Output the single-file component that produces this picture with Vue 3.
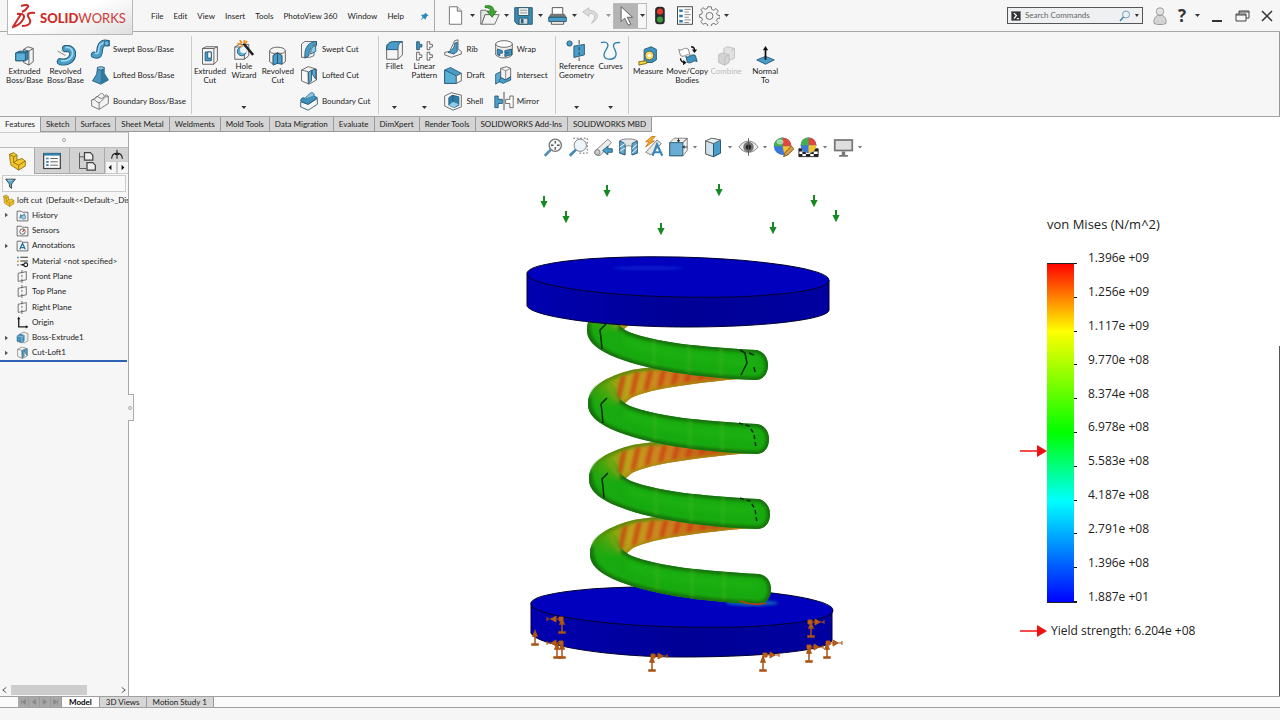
<script setup>
const D = '#1f5673'

const icons = {
  extrude: `<path d="M11 5l5-3 6 2v15l-5 4-6-3z" fill="#f4f4f4" stroke="#555"/><path d="M17 7l5-3M17 7v16M11 5l6 2" stroke="#555" fill="none"/><path d="M2 9l4-2h10v9l-3 2H2z" fill="#3d8ab5" stroke="${D}"/><path d="M2 9h11v9H2z" fill="#5fb0d8" stroke="${D}"/><path d="M13 9l3-2" stroke="${D}"/>`,
  revolve: `<path d="M7 6c6 6 13-3 12 7-1 7-8 8-14 6" fill="none" stroke="#999" stroke-dasharray="2 1"/><path d="M12 4c6-1 9 3 8 8s-7 9-14 7" stroke="${D}" stroke-width="8" fill="none" stroke-linecap="round"/><path d="M12 4c6-1 9 3 8 8s-7 9-14 7" stroke="#4a9dc9" stroke-width="6" fill="none" stroke-linecap="round"/><path d="M12 3c6-1 9 3 8 8s-7 8-13 7" stroke="#a5d6ee" stroke-width="2" fill="none"/><path d="M3 7l9 5" stroke="#777"/>`,
  sweep: `<path d="M5 19c9 3 5-6 8-11 2-3 5-4 8-3" stroke="${D}" stroke-width="8" fill="none" stroke-linecap="round"/><path d="M5 19c9 3 5-6 8-11 2-3 5-4 8-3" stroke="#4a9dc9" stroke-width="6" fill="none" stroke-linecap="round"/><path d="M6 17c7 2 3-6 6-10 2-2 4-3 7-3" stroke="#9fd2ec" stroke-width="2" fill="none"/><circle cx="20" cy="5" r="3" fill="#6fb6d8" stroke="${D}"/>`,
  loft: `<path d="M9 3h8v7l5 8-9 5-10-4 5-8z" fill="#4a95bd" stroke="${D}"/><path d="M13 5v18l9-5-5-8V3z" fill="#2f789f"/><ellipse cx="13" cy="4" rx="4" ry="2" fill="#8cc8e4" stroke="${D}"/>`,
  boundary: `<path d="M2 11l4-2c1-3 3-3 5-1l3 1 3-2c1-3 4-3 5 0v8L11 22l-9-4z" fill="#f3f3f3" stroke="#666"/><path d="M2 11c4-3 5 3 9 3 4-1 6-9 11-7M11 14v8M6 9l6-5c2-2 4-1 5 2" stroke="#666" fill="none"/>`,
  boundarycut: `<path d="M2 13l9 3 11-7v7l-11 7-9-4z" fill="#f6f6f6" stroke="${D}"/><path d="M2 12c1-5 4-5 6-2l5-5c2-3 5-2 5 1l4 2-11 8z" fill="#3f93bd" stroke="${D}"/><path d="M6 10l7-7c3-2 5-1 5 2" fill="#8ecbe7" stroke="${D}"/>`,
  excut: `<path d="M4 4l4-2h13v16l-4 4H4z" fill="#f5f5f5" stroke="#555"/><path d="M4 4h13v18M17 4l4-2" fill="none" stroke="#555"/><path d="M7 8h7v10H7z" fill="#4a9dc9" stroke="${D}"/><path d="M10 8h4v7h-4z" fill="#fff" stroke="${D}"/>`,
  hole: `<path d="M2 8l5-3h11v13l-5 4H2z" fill="#f2f2f2" stroke="#555"/><path d="M2 8h11v14" fill="none" stroke="#555"/><circle cx="10" cy="13" r="5" fill="#5bacd5" stroke="${D}"/><circle cx="12" cy="11" r="4" fill="#eef6fb"/><path d="M12 4l11 13" stroke="#222" stroke-width="3"/><path d="M8 0l2 4M13 0v4M5 4l4 1M16 1l-2 3M9 8l2-2" stroke="#f08a1a" stroke-width="2"/>`,
  revcut: `<path d="M3 7c0-6 18-6 18 0v12l-4 3V12l-5-3-5 3v10l-4-3z" fill="#f4f4f4" stroke="#555"/><path d="M7 12l5-3v12l-5 2zM12 9l5 3v10l-5-1z" fill="#4a9dc9" stroke="${D}"/><path d="M3 7c2 3 5 3 9 2 4 1 7 1 9-2" fill="none" stroke="#555"/>`,
  sweepcut: `<path d="M3 6l4-3h14v5l-3 3v9l-5 2H3z" fill="#f4f4f4" stroke="#555"/><path d="M21 3v4c-6 0-9 5-9 13l-5 3V19C7 10 12 3 21 3z" fill="#4a9dc9" stroke="${D}"/><path d="M20 8c-5 1-6 5-6 10l6-3z" fill="#8ecbe7" stroke="${D}"/>`,
  loftcut: `<path d="M3 6l8-4 10 3v13l-9 5-9-4z" fill="#f7f7f7" stroke="#555"/><path d="M11 9l4-3v13l-3 3zM16 6l4-1v12l-4-6z" fill="#5bacd5" stroke="${D}"/><path d="M3 6l8 2v15" fill="none" stroke="#555"/>`,
  fillet: `<path d="M3 6c3-4 5-4 8-4h10v15l-5 5H3z" fill="#f5f5f5" stroke="#555"/><path d="M3 11c0-6 3-8 7-9h11c-4 1-5 4-5 9z" fill="#4a9dc9" stroke="${D}"/><path d="M16 11v11" stroke="#555"/>`,
  linear: `<path d="M3 2h3v3h3v3H6v3H3z" fill="#3f93bd" stroke="${D}"/><path d="M15 2h3v3h3v3h-3v3h-3zM3 14h3v3h3v3H6v3H3zM15 14h3v3h3v3h-3v3h-3z" fill="#fff" stroke="#555"/>`,
  rib: `<path d="M14 2l4-1v11l4 3v3l-12 4-8-3v-3l6-1z" fill="#f5f5f5" stroke="#555"/><path d="M14 5c0 6-4 9-8 11l7 2 4-3V4z" fill="#4a9dc9" stroke="${D}"/>`,
  draft: `<path d="M2 6l7-3 13 7-6 3v9H2z" fill="#4a9dc9" stroke="${D}"/><path d="M2 6l14 7v9H2z" fill="#5bb0d8" stroke="${D}"/><path d="M16 13l6-3v9l-6 3z" fill="#f4f4f4" stroke="#555"/>`,
  shell: `<path d="M2 6l8-4 12 3v14l-10 4-10-5z" fill="#f6f6f6" stroke="#555"/><path d="M7 8l4-3 8 2v10l-6 3-6-3z" fill="#2e7da8" stroke="${D}"/><path d="M7 17l5-4 7 3-6 4z" fill="#8ecbe7"/><path d="M12 5v8" stroke="${D}"/>`,
  wrap: `<path d="M2 6v13c4 5 16 5 20 0V6z" fill="#eee" stroke="#555"/><ellipse cx="12" cy="6" rx="10" ry="4" fill="#fafafa" stroke="#555"/><path d="M4 12l6 2v3H7v3l-3-1zM13 14l8-2v7l-8 2v-3l4-1v-1l-4 1z" fill="#3f93bd" stroke="${D}"/>`,
  intersect: `<path d="M2 11l6-3v11l-6 4z" fill="#5bacd5" stroke="${D}"/><path d="M8 4l7-2 5 2v10l-6 4-6-3z" fill="#f1f1f1" stroke="#555"/><path d="M8 4l6 3v11M14 7l6-3" fill="none" stroke="#777"/><path d="M8 15l6 3 6-4v4l-9 4-5-2z" fill="#4a9dc9" stroke="${D}"/>`,
  mirror: `<path d="M1 6h4v4h5v5H5v5H1z" fill="#4a9dc9" stroke="${D}"/><path d="M23 6h-4v4h-5v5h5v5h4z" fill="#fff" stroke="#555"/><path d="M12 1v22" stroke="#333"/>`,
  refgeom: `<circle cx="4" cy="4" r="3" fill="#4a9dc9" stroke="${D}"/><path d="M9 7l12-2v12L9 20z" fill="#4a9dc9" stroke="${D}"/><path d="M15 0v5M15 8v4M15 14v3M15 20v4" stroke="#333"/>`,
  curves: `<path d="M1 3c8-2 10 2 6 8s-3 11 4 11 9-5 6-11c-3-5-2-9 6-8" fill="none" stroke="#2f7fa9" stroke-width="1.500"/>`,
  measure: `<path d="M7 5l8-3 6 3v12l-5 3H7z" fill="#3b93c1" stroke="${D}"/><circle cx="13" cy="12" r="5" fill="#f6d95c" stroke="#555"/><circle cx="13" cy="12" r="2" fill="#fff"/><path d="M1 19l9-1v3l-9 2z" fill="#f4d33c" stroke="#7a6510"/>`,
  move: `<path d="M2 5c4 3 6-4 11 0l2 7c-5-3-6 3-11 0z" fill="#fff" stroke="#777"/><path d="M10 13c4 3 6-4 11-1l2 7c-4-3-6 3-11 1z" fill="#3f93bd" stroke="${D}"/><path d="M16 2c3 0 4 1 4 4M4 15c0 3 1 4 4 5" fill="none" stroke="#111" stroke-width="1.500"/><path d="M17 5h6l-3 4zM7 17v6l4-3z" fill="#111"/>`,
  combine: `<path d="M9 4l4-2 8 2v11l-4 2-8-2z" fill="#e2e2e2" stroke="#bbb"/><path d="M3 11l4-2 8 2v9l-5 3-7-3z" fill="#d4d4d4" stroke="#bbb"/><path d="M10 14l5-3M10 14v9M17 7l4-3" stroke="#bbb"/>`,
  normal: `<path d="M2 17l10-4 10 4-10 5z" fill="#4a9dc9" stroke="${D}"/><path d="M12 17V5" stroke="#111" stroke-width="2"/><path d="M9 6l3-5 3 5z" fill="#111"/>`,
  newdoc: `<path d="M5 2h9l5 5v15H5z" fill="#fff" stroke="#666"/><path d="M14 2v5h5" fill="#ddd" stroke="#666"/>`,
  open: `<path d="M2 6h6l2 2h7v3H7l-4 11H2z" fill="#e5e5e5" stroke="#666"/><path d="M7 11h16l-5 11H3z" fill="#f3f3f3" stroke="#666"/><path d="M7 1c7-1 10 1 10 6h3l-5 7-6-7h4c0-3-2-4-6-4z" fill="#3fa535" stroke="#257a1d"/>`,
  save: `<path d="M2 3h20v19H5l-3-3z" fill="#3a8bb3" stroke="#234f66"/><path d="M6 3h12v9H6z" fill="#eef2f4" stroke="#234f66"/><path d="M8 6h8M8 9h8" stroke="#888"/><path d="M7 15h10v7H7z" fill="#d9d9d9" stroke="#234f66"/><path d="M9 16h3v5H9z" fill="#27627f"/>`,
  print: `<path d="M6 3h12v8H6z" fill="#fff" stroke="#444"/><path d="M4 10h16l3 5H1z" fill="#777"/><path d="M2 14h20v5H2z" fill="#4a9dc9" stroke="${D}"/><path d="M5 19h14v3H5z" fill="#fff" stroke="#444"/>`,
  undo: `<path d="M9 3L2 8l7 5v-3c7-1 9 3 3 11 9-5 10-14-3-15z" fill="#dcdcdc" stroke="#bcbcbc"/>`,
  select: `<path d="M7 2v17l4-4 4 8 3-1-4-8h6z" fill="#fff" stroke="#555"/>`,
  traffic: `<rect x="7" y="2" width="11" height="20" rx="4" fill="#2a2a2a"/><circle cx="12.500" cy="7.500" r="3.500" fill="#e03a2e"/><circle cx="12.500" cy="16.500" r="3.500" fill="#3a9c3c"/>`,
  options: `<rect x="4" y="2" width="17" height="20" fill="#fff" stroke="#333"/><path d="M6 5h4v3H6zM6 11h4v3H6zM6 17h4v3H6z" fill="#2d7fa9"/><path d="M12 5h7M12 8h5M12 11h7M12 14h5M12 17h7M12 20h5" stroke="#777"/>`,
  gear: `<path d="M10 2h4l.5 3 2.500 1 2.500-2 2.500 3-2 2.500 1 2 3 .5v3l-3 .5-1 2.500 2 2-2.500 2.500-2.500-1.500-2.500 1-.5 2.500h-4l-.5-2.500-2.500-1L4.500 22 2 19l2-2-1-2.500L.5 14v-3l2.500-.5 1-2.500-2-2.500L4.500 3 7 5l2.500-1z" fill="#f5f5f5" stroke="#666"/><circle cx="12" cy="12.500" r="4" fill="#f6f6f6" stroke="#666"/>`,
  pin: `<path d="M13 3l8 7-3 1-3 4v4L10 15 3 21l5-8-4-5h5l4-2z" fill="#2f87bd"/>`,
  user: `<path d="M4 22c-1-8 3-11 8-11s9 3 8 11c-4 2-12 2-16 0z" fill="#d4d4d4" stroke="#888"/><circle cx="12" cy="6" r="5" fill="#e2e2e2" stroke="#888"/>`,
  part: `<path d="M3 4l5-2 4 3v6l6-2 4 3v6l-8 5-9-6-1-4z" fill="#f2c62c" stroke="#8a6a08"/><path d="M3 4l5 3v7l6 3v6M8 7l4-2M14 17l8-5M8 14l4-3" stroke="#8a6a08" fill="none"/>`,
  props: `<rect x="2" y="3" width="20" height="18" fill="#fff" stroke="#444" stroke-width="1.500"/><path d="M2 4h20" stroke="#2d7fa9" stroke-width="3"/><path d="M5 8h3v2H5zM5 12h3v2H5zM5 16h3v2H5z" fill="#2d7fa9"/><path d="M10 9h9M10 13h9M10 17h9" stroke="#444"/>`,
  config: `<path d="M3 2v19h8M3 7h6" stroke="#444" fill="none"/><path d="M9 2h7l3 3v6H9zM12 14h7l3 3v6H12z" fill="#eee" stroke="#444" stroke-width="1.500"/>`,
  dim: `<path d="M2 20c1-14 19-14 20 0M12 3v17M8 12h8" fill="none" stroke="#222" stroke-width="2"/>`,
  funnel: `<path d="M3 4h18l-7 9v8l-4-3v-5z" fill="#5aa9cf" stroke="#333" stroke-width="1.500"/><path d="M7 6h8" stroke="#dff1fa"/>`,
  history: `<path d="M2 4h8l2 2h10v16H2z" fill="#f4f4f4" stroke="#555" stroke-width="1.500"/><path d="M7 18l2-7 3 3 4-5" stroke="#2d7fa9" stroke-width="2" fill="none"/><circle cx="14" cy="15" r="4" fill="#9ccbe3" stroke="#2d5f7a"/>`,
  sensors: `<path d="M2 4h8l2 2h10v16H2z" fill="#f4f4f4" stroke="#555" stroke-width="1.500"/><circle cx="12" cy="14" r="5" fill="#fff" stroke="#444" stroke-width="1.500"/><path d="M12 15l3-5" stroke="#d33" stroke-width="2"/>`,
  annot: `<path d="M2 4h8l2 2h10v16H2z" fill="#f4f4f4" stroke="#555" stroke-width="1.500"/><path d="M7 19l5-11 5 11M9 16h6" stroke="#2474a3" stroke-width="2.500" fill="none"/>`,
  material: `<path d="M8 4h14M8 11h14M8 18h6" stroke="#333" stroke-width="2"/><path d="M2 3h3v3H2z" fill="#2d7fa9"/><path d="M2 10h3v3H2z" fill="#d58512"/><path d="M2 17h3v3H2z" fill="#777"/><path d="M11 18h6" stroke="#111" stroke-width="3"/><circle cx="18" cy="18" r="3.500" fill="#fff" stroke="#111" stroke-width="2"/>`,
  plane: `<path d="M4 6l15-3v15L4 21z" fill="#f7f7f7" stroke="#555" stroke-width="1.500"/><path d="M11 0v6M11 9v4M11 16v8" stroke="#555" stroke-width="1.500"/>`,
  origin: `<path d="M5 4v16h16" fill="none" stroke="#222" stroke-width="2.500"/><path d="M2 6l3-5 3 5zM18 17l5 3-5 3z" fill="#222"/>`,
  bossx: `<path d="M8 5l7-3 7 3v13l-7 4-7-3z" fill="#eee" stroke="#555"/><path d="M2 9l5-3 8 2v10l-4 4-9-3z" fill="#3f93bd" stroke="${D}"/><path d="M2 9l9 2v11M11 11l4-3" fill="none" stroke="#bfe0f0"/>`,
  cmd: `<rect x="1" y="1" width="22" height="22" fill="#333" stroke="#777"/><path d="M7 5l6 6-6 7M14 18h5" stroke="#fff" stroke-width="3" fill="none"/>`,
  mag: `<circle cx="14" cy="9" r="7" fill="#e6f1f8" stroke="#5d87a5" stroke-width="1.500"/><path d="M9 14l-7 8" stroke="#4a80a6" stroke-width="3"/>`,
  zoomfit: `<circle cx="14" cy="10" r="7" fill="#f3f8fa" stroke="#777" stroke-width="1.500"/><path d="M14 5v3M14 12v3M9 10h3M16 10h3" stroke="#555" stroke-width="1.500"/><path d="M9 15l-7 7" stroke="#4f8fb3" stroke-width="3"/>`,
  zoomarea: `<path d="M6 2h16v17H12" fill="none" stroke="#555" stroke-dasharray="2 2"/><circle cx="14" cy="10" r="7" fill="#edf5f8" stroke="#777"/><path d="M9 15l-7 7" stroke="#3f87b4" stroke-width="3"/>`,
  prev: `<path d="M2 17L17 3l4 4L9 21c-3 2-8 0-7-4z" fill="#ececec" stroke="#777"/><ellipse cx="5" cy="18" rx="3" ry="3" fill="#ccc" stroke="#777"/><path d="M22 14h-5v-3l-6 5 6 5v-3h5z" fill="#4a9dc9" stroke="${D}"/>`,
  section: `<path d="M2 5c3-3 17-3 20 0v14l-6 2v-9c-2-2-6-2-8 0v9l-6-2z" fill="#e6e6e6" stroke="#777"/><path d="M2 5l6 3v13l-6-2zM16 8l6-3v14l-6 2z" fill="#62a9cf" stroke="${D}"/><path d="M2 12l6-4M2 17l6-4M16 14l6-5M16 19l6-5" stroke="#fff"/>`,
  dynann: `<path d="M3 18L16 4l5 4L9 21z" fill="#e7e7e7" stroke="#777"/><path d="M10 0L3 6h4l-4 6 10-7H9l5-5z" fill="#f6a93a" stroke="#c97816"/><path d="M11 22l5-13 6 13M13 18h7" fill="none" stroke="#3a88b8" stroke-width="2.500"/>`,
  orient: `<path d="M2 7l5-5h15v14l-5 6H2z" fill="#eee" stroke="#777"/><path d="M2 7h15v15H2z" fill="#69aed2" stroke="${D}"/><path d="M17 7l5-5M12 2v4M22 12h-4" stroke="#333"/><path d="M10 4h4l-2 3zM19 10v4l-3-2z" fill="#333"/>`,
  display: `<path d="M3 5l7-3 10 2v15l-8 4-9-3z" fill="#ddd" stroke="#666"/><path d="M3 5l9 3v15l-9-3z" fill="#cfe2ec" stroke="#555"/><path d="M12 8l8-4v15l-8 4z" fill="#4a9dc9" stroke="${D}"/><path d="M3 5l7-3 10 2-8 4z" fill="#e7f1f6" stroke="#666"/>`,
  eye: `<path d="M1 12c6-9 16-9 22 0-6 8-16 8-22 0z" fill="#eee" stroke="#777"/><circle cx="12" cy="12" r="6" fill="#777"/><circle cx="12" cy="12" r="3" fill="#222"/><path d="M12 2v20" stroke="#555"/>`,
  ball: `<circle cx="11" cy="11" r="10" fill="#3b78d8"/><path d="M11 1a10 10 0 0 1 10 10H11z" fill="#e0483c"/><path d="M11 1a10 10 0 0 0-10 10h10z" fill="#45b04a"/><path d="M11 11h10a10 10 0 0 1-8 10z" fill="#f0c530"/><ellipse cx="8" cy="6" rx="4" ry="3" fill="#fff" opacity=".5"/><path d="M12 23l2-5 7-7 3 3-7 7z" fill="#d99a4a" stroke="#704d1c"/>`,
  scene: `<path d="M1 14h22v9H1z" fill="#fff" stroke="#222"/><path d="M1 14h4v3H1zM18 14h5v3h-5zM5 17h4v3H5zM14 17h4v3h-4zM1 20h4v3H1zM9 20h5v3H9zM18 20h5v3h-5z" fill="#222"/><circle cx="12" cy="10" r="9" fill="#3b78d8"/><path d="M12 1a9 9 0 0 1 9 9h-9z" fill="#e0483c"/><path d="M12 1a9 9 0 0 0-9 9h9z" fill="#45b04a"/><path d="M12 10h9a9 9 0 0 1-9 9z" fill="#f0c530"/>`,
  monitor: `<path d="M1 3h22v14H1z" fill="#777"/><path d="M3 5h18v10H3z" fill="#dedede"/><path d="M10 17h4v4h-4zM7 21h10v2H7z" fill="#777"/>`,
}

const menus = ['File', 'Edit', 'View', 'Insert', 'Tools', 'PhotoView 360', 'Window', 'Help']
const quick = [
  { icon: 'newdoc', label: 'New', more: true },
  { icon: 'open', label: 'Open', more: true },
  { icon: 'save', label: 'Save', more: true },
  { icon: 'print', label: 'Print', more: true },
  { icon: 'undo', label: 'Undo', more: true, off: true },
  { icon: 'select', label: 'Select', more: true, on: true },
  { icon: 'traffic', label: 'Rebuild' },
  { icon: 'options', label: 'File Properties' },
  { icon: 'gear', label: 'Options', more: true },
]
const groups = [
  {
    size: 'wide',
    big: [['extrude', 'Extruded', 'Boss/Base'], ['revolve', 'Revolved', 'Boss/Base']],
    cols: [[['sweep', 'Swept Boss/Base'], ['loft', 'Lofted Boss/Base'], ['boundary', 'Boundary Boss/Base']]],
  },
  {
    size: 'mid',
    big: [['excut', 'Extruded', 'Cut'], ['hole', 'Hole', 'Wizard', 1], ['revcut', 'Revolved', 'Cut']],
    cols: [[['sweepcut', 'Swept Cut'], ['loftcut', 'Lofted Cut'], ['boundarycut', 'Boundary Cut']]],
  },
  {
    size: 'slim',
    big: [['fillet', 'Fillet', '', 1], ['linear', 'Linear', 'Pattern', 1]],
    cols: [
      [['rib', 'Rib'], ['draft', 'Draft'], ['shell', 'Shell']],
      [['wrap', 'Wrap'], ['intersect', 'Intersect'], ['mirror', 'Mirror']],
    ],
  },
  { size: 'pair', big: [['refgeom', 'Reference', 'Geometry', 1], ['curves', 'Curves', '', 1]], cols: [] },
  {
    size: 'tools',
    big: [['measure', 'Measure', ''], ['move', 'Move/Copy', 'Bodies'], ['combine', 'Combine', '', 0, 1], ['normal', 'Normal', 'To']],
    cols: [],
  },
]
const tabs = ['Features', 'Sketch', 'Surfaces', 'Sheet Metal', 'Weldments', 'Mold Tools', 'Data Migration', 'Evaluate', 'DimXpert', 'Render Tools', 'SOLIDWORKS Add-Ins', 'SOLIDWORKS MBD']
const tree = [
  ['history', 'History', 1],
  ['sensors', 'Sensors'],
  ['annot', 'Annotations', 1],
  ['material', 'Material <not specified>'],
  ['plane', 'Front Plane'],
  ['plane', 'Top Plane'],
  ['plane', 'Right Plane'],
  ['origin', 'Origin'],
  ['bossx', 'Boss-Extrude1', 1],
  ['loftcut', 'Cut-Loft1', 1],
]
const hud = [
  ['zoomfit', 'Zoom to Fit'], ['zoomarea', 'Zoom to Area'], ['prev', 'Previous View'], ['section', 'Section View'],
  ['dynann', 'Dynamic Annotation Views'], ['orient', 'View Orientation', 1], ['display', 'Display Style', 1],
  ['eye', 'Hide/Show Items', 1], ['ball', 'Edit Appearance'], ['scene', 'Apply Scene', 1], ['monitor', 'View Settings', 1],
]
const loads = [[544, 202], [566, 217], [607, 191], [661, 229], [719, 190], [773, 228], [814, 201], [836, 216]]
const coils = [
  { x: 2, y: 150, last: true },
  { x: 1, y: 75 },
  { x: 0, y: 0 },
  { x: -1, y: -74, first: true },
]
const stripes = Array.from({ length: 9 }, (_, i) => 618 + i * 13)
const upFix = [[562, 618], [557, 643], [562, 643], [535, 630], [652, 656], [763, 656], [811, 622], [809, 647], [827, 643]]
const sideFix = [[561, 619, 1], [561, 643, 1], [653, 656, -1], [765, 655, -1], [810, 622, -1], [809, 647, -1], [828, 643, -1]]
const scale = ['1.396e +09', '1.256e +09', '1.117e +09', '9.770e +08', '8.374e +08', '6.978e +08', '5.583e +08', '4.187e +08', '2.791e +08', '1.396e +08', '1.887e +01']
const ticks = scale.map((_, i) => Math.round(i * 33.8) + 1)
</script>

<template>
  <div class="window">
    <header class="titlebar">
      <div class="brand">
        <svg class="ds" viewBox="0 0 24 26" aria-hidden="true">
          <path d="M9 3c6-2 9-1 6 2-1 2-3 3-5 4M5 11c7-1 9 2 5 7-2 3-6 5-9 6l8-13M23 10c-6-1-9 1-6 5 3 5 0 8-7 8" fill="none" stroke="#cf2a27" stroke-width="2" />
        </svg>
        <span class="name"><b>SOLID</b>WORKS</span>
      </div>
      <nav class="menus">
        <button v-for="m in menus" :key="m">{{ m }}</button>
        <button class="pin" aria-label="Pin menu"><svg viewBox="0 0 24 24" v-html="icons.pin"></svg></button>
      </nav>
      <div class="quick">
        <button v-for="q in quick" :key="q.icon" :class="{ on: q.on, off: q.off }" :aria-label="q.label">
          <span class="face"><svg viewBox="0 0 24 24" v-html="icons[q.icon]"></svg></span>
          <i v-if="q.more" class="caret"></i>
        </button>
      </div>
      <label class="search">
        <svg viewBox="0 0 24 24" v-html="icons.cmd"></svg>
        <input type="text" placeholder="Search Commands" aria-label="Search Commands" />
        <svg class="lens" viewBox="0 0 24 24" v-html="icons.mag"></svg>
        <i class="caret"></i>
      </label>
      <div class="controls">
        <button aria-label="Account"><svg class="person" viewBox="0 0 24 24" v-html="icons.user"></svg></button>
        <button class="help" aria-label="Help">?</button>
        <i class="caret"></i>
        <button aria-label="Minimize"><svg viewBox="0 0 16 16"><path d="M3 13h10" stroke="#333" stroke-width="2" /></svg></button>
        <button aria-label="Restore"><svg viewBox="0 0 16 16"><path d="M5 6V3h10v7h-3M2 6h10v7H2zM5 4h10M2 7h10" fill="none" stroke="#444" /></svg></button>
        <button aria-label="Close"><svg viewBox="0 0 16 16"><path d="M3 3l10 10M13 3L3 13" stroke="#333" stroke-width="1.5" /></svg></button>
      </div>
    </header>

    <section class="ribbon">
      <div v-for="(g, gi) in groups" :key="gi" class="group" :class="g.size">
        <button v-for="b in g.big" :key="b[1] + b[2]" class="big" :class="{ drop: b[3] }" :disabled="!!b[4]">
          <svg viewBox="0 0 24 24" v-html="icons[b[0]]"></svg>
          <span>{{ b[1] }}</span>
          <span>{{ b[2] }}</span>
          <i v-if="b[3]" class="caret"></i>
        </button>
        <div v-for="(c, ci) in g.cols" :key="ci" class="col">
          <button v-for="s in c" :key="s[1]"><svg viewBox="0 0 24 24" v-html="icons[s[0]]"></svg>{{ s[1] }}</button>
        </div>
      </div>
    </section>

    <nav class="tabs">
      <button v-for="(t, i) in tabs" :key="t" :class="{ active: i === 0 }">{{ t }}</button>
    </nav>

    <main class="work">
      <aside class="panel">
        <div class="grip"><i></i></div>
        <div class="ptabs">
          <button class="active" aria-label="Feature tree"><svg viewBox="0 0 24 24" v-html="icons.part"></svg></button>
          <button aria-label="Properties"><svg viewBox="0 0 24 24" v-html="icons.props"></svg></button>
          <button aria-label="Configurations"><svg viewBox="0 0 24 24" v-html="icons.config"></svg></button>
          <div class="rest">
            <svg viewBox="0 0 24 24" v-html="icons.dim"></svg>
            <div class="steps">
              <button aria-label="Previous tab"><svg viewBox="0 0 10 10"><path d="M6 2v6L3 5z" /></svg></button>
              <button aria-label="Next tab"><svg viewBox="0 0 10 10"><path d="M4 2v6l3-3z" /></svg></button>
            </div>
          </div>
        </div>
        <label class="filter"><svg viewBox="0 0 24 24" v-html="icons.funnel"></svg><input type="text" aria-label="Filter" /></label>
        <ul class="tree">
          <li class="root"><svg viewBox="0 0 24 24" v-html="icons.part"></svg>loft cut&nbsp; (Default&lt;&lt;Default&gt;_Dis</li>
          <li v-for="t in tree" :key="t[1]">
            <span class="fold"><svg v-if="t[2]" viewBox="0 0 6 8"><path d="M1 1l4 3-4 3z" fill="#555" /></svg></span>
            <svg viewBox="0 0 24 24" v-html="icons[t[0]]"></svg>{{ t[1] }}
          </li>
        </ul>
        <div class="rollback"></div>
        <div class="hscroll">
          <svg viewBox="0 0 8 8"><path d="M6 1L2 4l4 3" /></svg>
          <div class="track"><div class="thumb"></div></div>
          <svg viewBox="0 0 8 8"><path d="M2 1l4 3-4 3" /></svg>
        </div>
        <div class="handle"><i></i></div>
      </aside>

      <section class="viewport">
        <div class="hud">
          <button v-for="h in hud" :key="h[0]" :aria-label="h[1]">
            <svg viewBox="0 0 24 24" v-html="icons[h[0]]"></svg><i v-if="h[2]" class="caret"></i>
          </button>
        </div>

        <svg class="model" viewBox="520 170 369 520">
          <defs>
            <linearGradient id="bk" gradientUnits="userSpaceOnUse" x1="588" x2="755" y1="0" y2="0">
              <stop offset="0" stop-color="#279a0c" />
              <stop offset=".12" stop-color="#76a80c" />
              <stop offset=".24" stop-color="#c0a01a" />
              <stop offset=".45" stop-color="#cc8420" />
              <stop offset=".75" stop-color="#c05a14" />
              <stop offset="1" stop-color="#98870e" />
            </linearGradient>
            <linearGradient id="fr" gradientUnits="userSpaceOnUse" x1="0" x2="0" y1="380" y2="408">
              <stop offset="0" stop-color="#18aa10" stop-opacity="0" />
              <stop offset="1" stop-color="#18aa10" />
            </linearGradient>
            <linearGradient id="side" x1="0" x2="1">
              <stop offset="0" stop-color="#0000b0" />
              <stop offset=".5" stop-color="#000096" />
              <stop offset="1" stop-color="#0000a0" />
            </linearGradient>
            <filter id="b1"><feGaussianBlur stdDeviation="1.500" /></filter>
            <filter id="b2" x="-20%" y="-50%" width="140%" height="200%"><feGaussianBlur stdDeviation="3" /></filter>
            <clipPath id="cb"><path d="M588 405C588 388 603 378 628 371C655 364 710 366 750 372L752 378C710 381 650 388 631 398L624 404L612 420Z" /></clipPath>
            <clipPath id="cf"><path d="M588 405C588 390 594 384 606 379L616 388C617 397 620 401 630 406C655 416 700 421 757 424C764 425 769 431 769 439C769 448 764 454 756 454C700 452 645 444 611 429C596 422 588 414 588 405Z" /></clipPath>
          </defs>

          <g>
            <path d="M531 603v30c5 12 75 24 151 24s148-6 150-17v-30z" fill="url(#side)" stroke="#000030" />
            <ellipse cx="682" cy="607" rx="151" ry="20" transform="rotate(1.300 682 607)" fill="#0000be" stroke="#000030" />
            <ellipse cx="752" cy="603" rx="26" ry="3" fill="#0a60b8" filter="url(#b1)" />
          </g>

          <g v-for="c in coils" :key="c.y" :transform="`translate(${c.x} ${c.y})`">
            <g clip-path="url(#cb)">
              <path d="M580 360h180v65H580z" fill="url(#bk)" />
              <g filter="url(#b1)">
                <path v-for="s in stripes" :key="s" :d="`M${s + 9} 362Q${s + 5} 376 ${s} 400`" stroke="#cc3c12" stroke-width="5" fill="none" opacity=".75" />
                <path d="M588 405C588 388 603 378 628 371C640 367 655 367 665 367" stroke="#5c8c08" stroke-width="6" fill="none" />
                <path d="M752 378C710 381 650 388 631 398L622 404" stroke="#a88b0c" stroke-width="4" fill="none" />
              </g>
            </g>
            <g clip-path="url(#cf)">
              <path d="M580 370h200v90H580z" fill="url(#fr)" />
              <path d="M625 414C650 426 700 433 756 436" stroke="#20bb14" stroke-width="8" fill="none" opacity=".5" filter="url(#b2)" />
              <g filter="url(#b1)">
                <path d="M588 396C588 414 596 422 611 429C645 444 700 452 756 454C764 454 769 448 769 439C769 431 764 425 757 424C700 421 655 416 630 406L619 400" stroke="#127009" stroke-width="6" fill="none" />
                <path d="M655 414v26M690 418v30M722 420v30" stroke="#55b822" stroke-width="3" opacity=".3" />
                <path d="M609 385q2 10 10 17" fill="none" stroke="#86a010" stroke-width="4" opacity=".6" />
              </g>
            </g>
            <path v-if="!c.last" d="M607 398l-6 6 1 8 1 11" fill="none" stroke="#042a04" stroke-width="1.500" />
            <path v-if="c.first" d="M741 424l5 3 2 10-6 12M750 427l5 2M755 441l1 5" fill="none" stroke="#042a04" stroke-width="1.500" />
            <path v-else-if="!c.last" d="M739 423l10 3 5 8 2 14" fill="none" stroke="#042a04" stroke-width="1.500" stroke-dasharray="4 3" />
            <path v-else d="M738 451q12 5 26 2" fill="none" stroke="#b5420e" stroke-width="1.500" />
          </g>

          <g>
            <path d="M527 274v32c5 11 80 21 160 21s142-8 142-17v-30z" fill="url(#side)" stroke="#000030" />
            <ellipse cx="678" cy="277" rx="151" ry="20" transform="rotate(1.300 678 277)" fill="#0000be" stroke="#000030" />
            <ellipse cx="648" cy="268" rx="36" ry="2" fill="#0a1ccc" filter="url(#b1)" />
          </g>

          <path v-for="(l, i) in loads" :key="i" :d="`M${l[0]} ${l[1] - 6}v7M${l[0] - 2} ${l[1]}h4l-2 4z`" fill="#168a22" stroke="#168a22" stroke-width="2" />
          <g fill="#c4651c" stroke="#a95212">
            <path v-for="(f, i) in upFix" :key="'u' + i" :d="`M${f[0] - 3} ${f[1] + 15}h6v-1h-6zM${f[0]} ${f[1] + 14}V${f[1] + 5}M${f[0] - 2} ${f[1] + 6}l2-5 2 5z`" stroke-width="1.500" />
            <path v-for="(f, i) in sideFix" :key="'s' + i" :d="`M${f[0]} ${f[1]}h${f[2] * -14}M${f[0] - f[2] * 5} ${f[1] - 3}v6l${f[2] * -5}-3zM${f[0] - f[2] * 14} ${f[1] - 2}v4M${f[0] - 2} ${f[1] - 2}h4v4h-4z`" />
          </g>
        </svg>

        <div class="legend">
          <p class="ltitle">von Mises (N/m^2)</p>
          <div class="lbody">
            <svg class="bar" viewBox="0 0 58 340">
              <defs>
                <linearGradient id="rain" x1="0" x2="0" y1="0" y2="1">
                  <stop offset="0" stop-color="#f00" />
                  <stop offset=".2" stop-color="#ff0" />
                  <stop offset=".5" stop-color="#0f0" />
                  <stop offset=".7" stop-color="#0ff" />
                  <stop offset="1" stop-color="#00f" />
                </linearGradient>
              </defs>
              <path d="M27 0h27v340H27z" fill="url(#rain)" />
              <path d="M27 .5h30M27 339.500h30" stroke="#222" />
              <path v-for="t in ticks" :key="t" :d="`M54 ${t - 0.5}h3`" stroke="#111" />
              <path d="M0 188h17" stroke="#e11" stroke-width="1.500" />
              <path d="M17 182v12l10-6z" fill="#e11" />
            </svg>
            <ol><li v-for="s in scale" :key="s">{{ s }}</li></ol>
          </div>
          <p class="yield">
            <svg viewBox="0 0 28 12"><path d="M0 6h17" stroke="#e11" stroke-width="1.500" /><path d="M17 0v12l10-6z" fill="#e11" /></svg>Yield strength: 6.204e +08
          </p>
        </div>
      </section>
    </main>

    <footer>
      <div class="sheets">
        <div class="steppers">
          <button aria-label="First"><svg viewBox="0 0 10 10"><path d="M3 2v6M8 2v6L4 5z" /></svg></button>
          <button aria-label="Previous"><svg viewBox="0 0 10 10"><path d="M7 2v6L3 5z" /></svg></button>
          <button aria-label="Next"><svg viewBox="0 0 10 10"><path d="M3 2v6l4-3z" /></svg></button>
          <button aria-label="Last"><svg viewBox="0 0 10 10"><path d="M7 2v6M2 2v6l4-3z" /></svg></button>
        </div>
        <button class="sheet active">Model</button>
        <button class="sheet">3D Views</button>
        <button class="sheet">Motion Study 1</button>
      </div>
      <div class="status"></div>
    </footer>
  </div>
</template>

<style>
html, body { background: #fff; }
</style>

<style scoped>
.window { display: flex; flex-direction: column; height: 100vh; overflow: hidden; font: 8px/9px Lato, "Open Sans", sans-serif; color: #222; background: #fff; }
.window * { box-sizing: border-box; }
button { font: inherit; color: inherit; border: 0; padding: 0; background: none; display: flex; align-items: center; white-space: nowrap; }
input { font: inherit; color: inherit; border: 0; padding: 0; background: none; min-width: 0; outline: 0; }
svg { display: block; flex: none; }
p, ul, ol { margin: 0; padding: 0; list-style: none; }
.caret { display: block; flex: none; width: 6px; height: 3px; background: #333; clip-path: polygon(0 0, 100% 0, 50% 100%); }

.titlebar { display: flex; align-items: center; height: 32px; flex: none; background: #f6f6f6; border-bottom: 1px solid #a8a8a8; }
.brand { align-self: flex-start; position: relative; display: flex; align-items: center; gap: 4px; width: 126px; height: 35px; flex: none; margin-left: 7px; padding: 0 0 3px 4px; background: linear-gradient(160deg, #fff 45%, #dedede); border: 1px solid #b8b8b8; border-top: 0; }
.ds { width: 24px; height: 26px; }
.name { font-size: 13px; line-height: 16px; padding-top: 5px; color: #cf3a35; }
.name b { font-weight: 900; color: #cf2a27; }
.menus { display: flex; align-items: center; gap: 10px; width: 302px; height: 31px; padding: 2px 0 0 18px; border-right: 1px solid #aaa; flex: none; }
.pin { margin-left: 5px; }
.pin svg { width: 11px; height: 11px; }
.quick { display: flex; align-items: center; padding-left: 8px; }
.quick button { height: 26px; }
.quick .face { display: flex; width: 25px; height: 26px; align-items: center; justify-content: center; }
.quick svg { width: 21px; height: 21px; }
.quick .caret { width: 5px; margin: 0 2px; }
.quick .on { background: linear-gradient(90deg, #b4b4b4 25px, #f6f6f6 25px); outline: 1px solid #bbb; outline-offset: -1px; }
.quick .off .caret { background: #999; }
.search { display: flex; align-items: center; gap: 4px; width: 136px; height: 17px; margin-left: auto; padding: 0 3px; border: 1px solid #555; background: #eef0f2; flex: none; }
.search svg { width: 10px; height: 10px; }
.search .lens { width: 12px; height: 12px; }
.search .caret { width: 4px; }
.search input { flex: 1; }
.search input::placeholder { color: #666; opacity: 1; }
.controls { display: flex; align-items: center; gap: 9px; padding: 0 5px 0 8px; flex: none; }
.controls svg { width: 16px; height: 16px; }
.controls .person { width: 18px; height: 24px; }
.help { font: bold 17px/20px "Open Sans", sans-serif; color: #333; }
.controls .caret { width: 5px; }

.ribbon { display: flex; height: 85px; flex: none; background: #f6f6f6; border-bottom: 1px solid #a4a4a4; border-right: 1px solid #999; }
.group { display: flex; flex: none; margin: 4px 0 2px; padding: 0 5px 0 4px; border-right: 1px solid #ccc; }
.mid { padding: 0 8px 0 1px; }
.slim { padding: 0 7px 0 0; }
.pair { padding: 0 0 0 4px; }
.tools { padding: 0; border: 0; }
.big { flex-direction: column; width: 41px; padding-top: 9px; }
.mid .big, .pair .big { width: 34px; }
.slim .big { width: 30px; }
.tools .big { width: 39px; }
.big svg { width: 21px; height: 21px; margin-bottom: 1px; }
.big span { min-height: 9px; }
.big.drop { padding-top: 4px; }
.big .caret { margin-top: auto; margin-bottom: 5px; width: 5px; }
.big:disabled { color: #bbb; }
.col { display: flex; flex-direction: column; gap: 6px; padding: 3px 0 0 4px; }
.col button { gap: 3px; height: 20px; }
.col svg { width: 20px; height: 20px; }
.col + .col { padding-left: 9px; }

.tabs { display: flex; height: 15px; flex: none; }
.tabs button { padding: 0 5px; background: #d4d4d4; border: 1px solid #999; border-width: 0 1px 1px 0; }
.tabs .active { background: #f6f6f6; border-bottom: 0; }

.work { display: flex; flex: 1; min-height: 0; }
.panel { position: relative; display: flex; flex-direction: column; width: 129px; flex: none; background: #f6f6f6; border-right: 1px solid #a8a8a8; border-top: 1px solid #ccc; }
.grip { display: flex; align-items: center; justify-content: center; height: 15px; border-bottom: 1px solid #bbb; }
.grip i, .handle i { width: 4px; height: 4px; border: 1px solid #aaa; border-radius: 50%; }
.ptabs { display: flex; height: 26px; }
.ptabs > button { width: 35px; justify-content: center; background: #d2d2d2; border: 1px solid #aaa; border-width: 0 1px 1px 0; }
.ptabs > .active { background: #f6f6f6; border-bottom: 0; }
.ptabs svg { width: 20px; height: 20px; }
.rest { flex: 1; display: flex; flex-direction: column; align-items: center; background: #d2d2d2; overflow: hidden; }
.rest > svg { width: 18px; height: 13px; }
.steps { display: flex; }
.steps button { width: 12px; height: 13px; justify-content: center; background: #f6f6f6; border: 1px solid #ccc; }
.steps svg { width: 9px; height: 9px; }
.filter { display: flex; align-items: center; height: 17px; margin: 1px 2px 0; padding-left: 1px; background: #fafafa; border: 1px solid #ccc; }
.filter svg { width: 13px; height: 13px; }
.filter input { flex: 1; }
.tree { display: flex; flex-direction: column; justify-content: space-between; height: 168px; overflow: hidden; }
.tree li { display: flex; align-items: center; gap: 3px; height: 15px; padding-top: 1px; white-space: nowrap; overflow: hidden; }
.tree li > svg { width: 13px; height: 13px; }
.tree .root { padding-left: 2px; gap: 2px; }
.fold { width: 13px; padding-left: 4px; flex: none; }
.fold svg { width: 5px; height: 6px; }
.rollback { height: 2px; background: #2f62b5; margin-right: 1px; }
.hscroll { display: flex; align-items: center; gap: 3px; margin-top: auto; height: 12px; padding: 0 1px; }
.hscroll svg { width: 7px; height: 8px; fill: none; stroke: #444; stroke-width: 1px; }
.track { flex: 1; }
.thumb { width: 72%; height: 10px; background: #cdcdcd; }
.handle { position: absolute; left: 100%; top: 261px; z-index: 1; display: flex; align-items: center; width: 6px; height: 27px; background: #f6f6f6; border: 1px solid #aaa; border-left: 0; }

.viewport { position: relative; flex: 1; display: flex; flex-direction: column; align-items: center; overflow: hidden; }
.viewport::after { content: ""; position: absolute; right: 0; top: 214px; bottom: 0; border-right: 1px solid #555; }
.hud { display: flex; align-items: center; gap: 4px; padding: 4px 3px 0 0; }
.hud svg { width: 21px; height: 22px; }
.hud .caret { width: 5px; margin: 0 1px 0 4px; background: #777; }
.model { width: 369px; height: 520px; margin-top: 12px; }
.legend { position: absolute; right: 79px; top: 84px; width: 181px; font: 12px/16px "Open Sans", "Noto Sans", sans-serif; color: #222; white-space: nowrap; }
.ltitle { padding-left: 27px; font-size: 13px; }
.lbody { display: flex; gap: 10px; padding-top: 18px; }
.bar { width: 58px; height: 340px; margin-top: 13px; }
.lbody ol { display: flex; flex-direction: column; justify-content: space-between; height: 355px; }
.yield { display: flex; align-items: center; gap: 3px; padding-top: 18px; }
.yield svg { width: 28px; height: 12px; }

footer { flex: none; }
.sheets { display: flex; height: 12px; border: 1px solid #a0a0a0; border-width: 1px 0; background: #fafafa; padding-left: 18px; }
.steppers { display: flex; background: #a8a8a8; }
.steppers button { width: 11px; justify-content: center; border-right: 1px solid #999; }
.steppers svg { width: 8px; height: 8px; fill: #888; stroke: #888; }
.sheet { padding: 0 6px; background: #d6d6d6; border-right: 1px solid #999; }
.sheet.active { padding: 0 7px; background: #fff; font-weight: bold; color: #000; }
.status { height: 12px; background: #f6f6f6; }
</style>
